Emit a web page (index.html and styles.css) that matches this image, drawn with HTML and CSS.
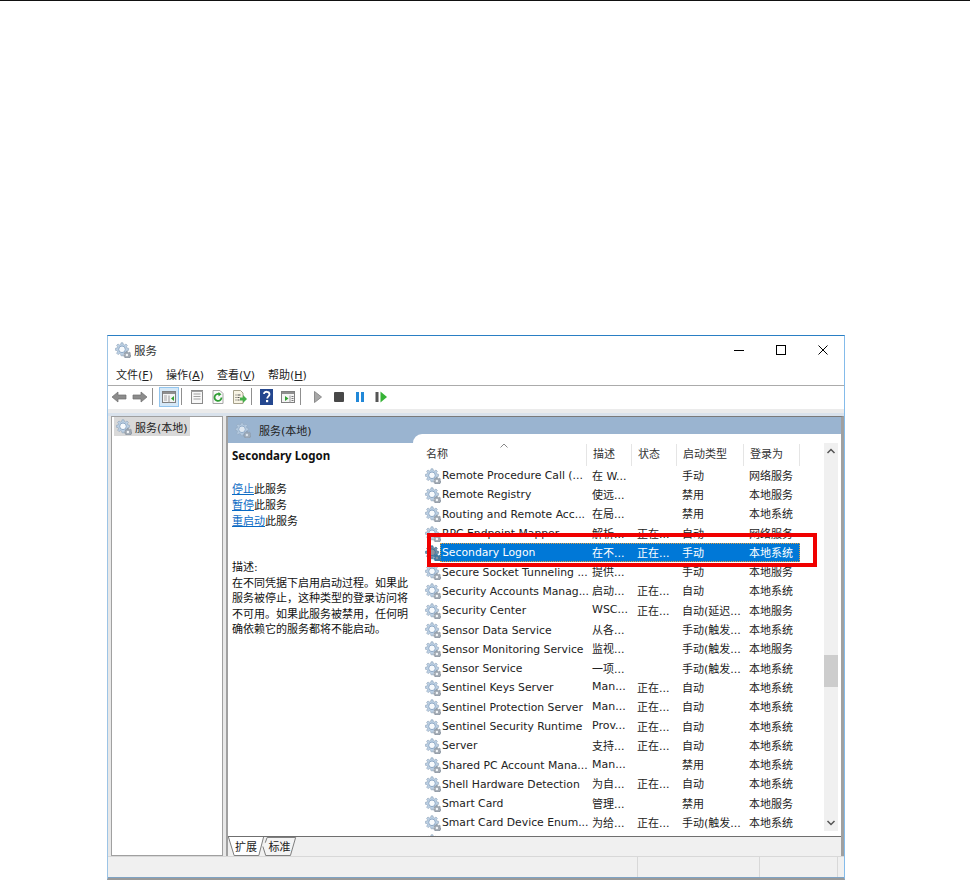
FILE: index.html
```html
<!DOCTYPE html>
<html lang="zh">
<head>
<meta charset="utf-8">
<title>服务</title>
<link rel="stylesheet" href="styles.css">
</head>
<body>
<svg class="defs" width="0" height="0" aria-hidden="true">
  <defs>
    <symbol id="gear" viewBox="0 0 16 16">
      <path d="M6 .8h2l.3 1.7 1.2.5L11 2l1.400 1.400-1 1.400.5 1.200 1.700.3v2l-1.700.3-.5 1.200 1 1.400L11 12.600l-1.500-1-1.200.5-.3 1.700H6l-.3-1.700-1.200-.5-1.500 1L1.600 11.200l1-1.400-.5-1.200L.4 8.300v-2l1.700-.3.5-1.200-1-1.400L3 2l1.500 1 1.200-.5z" fill="#bcd0e4" stroke="#8fa3b9" stroke-width=".6"/>
      <circle cx="7" cy="7.300" r="3.300" fill="#f7fafd" stroke="#86a2c0" stroke-width=".9"/>
      <path d="M11.200 9.400h1.400l.2 1 .8.3.9-.6 1 1-.6.9.3.8.8.2v1.400l-.8.2-.3.8.2.6H9.700l.2-.6-.3-.8-.8-.2v-1.400l.8-.2.3-.8-.6-.9 1-1 .9.6.8-.3z" fill="#a3abb4" stroke="#7b8794" stroke-width=".5"/>
      <circle cx="11.900" cy="13" r="1.200" fill="#f2f5f8"/>
    </symbol>
  </defs>
</svg>
<div class="topline"></div>
<main class="window">
  <header class="titlebar">
    <svg class="ic-gear"><use href="#gear"/></svg>
    <span class="title-text">服务</span>
    <div class="controls">
      <svg class="ctl" viewBox="0 0 12 12"><path d="M1 6.500h10" stroke="#000" fill="none"/></svg>
      <svg class="ctl" viewBox="0 0 12 12"><rect x="1.500" y="1.500" width="9" height="9" stroke="#000" fill="none"/></svg>
      <svg class="ctl" viewBox="0 0 12 12"><path d="M1.500 1.500l9 9M10.500 1.500l-9 9" stroke="#000" fill="none"/></svg>
    </div>
  </header>
  <nav class="menubar">
    <span class="menu">文件(<u>F</u>)</span>
    <span class="menu">操作(<u>A</u>)</span>
    <span class="menu">查看(<u>V</u>)</span>
    <span class="menu">帮助(<u>H</u>)</span>
  </nav>
  <div class="toolbar">
    <span class="tb"><svg viewBox="0 0 16 16"><path d="M1 8l6-5v3h8v4H7v3z" fill="#8c8c8c" stroke="#6e6e6e" stroke-width=".7"/></svg></span>
    <span class="tb"><svg viewBox="0 0 16 16"><path d="M15 8L9 3v3H1v4h8v3z" fill="#8c8c8c" stroke="#6e6e6e" stroke-width=".7"/></svg></span>
    <span class="sep"></span>
    <span class="tb tb-active"><svg viewBox="0 0 16 16"><rect x="1.500" y="2.500" width="13" height="11" fill="#f4f4f4" stroke="#7f7f7f"/><path d="M2 3h12v2H2z" fill="#8f8f8f"/><path d="M8 6.500v7" stroke="#9a9a9a"/><path d="M3 7h3M3 9h3M3 11h3" stroke="#a8a8a8"/><path d="M13 7v5l-3-2.500z" fill="#30a030"/></svg></span>
    <span class="sep"></span>
    <span class="tb"><svg viewBox="0 0 16 16"><rect x="2.500" y="1.500" width="11" height="13" fill="#f7f7f7" stroke="#8a8a8a"/><path d="M2 2.500h12M4.500 5h7M4.500 7.500h7M4.500 10h7" stroke="#a0a0a0"/></svg></span>
    <span class="tb"><svg viewBox="0 0 16 16"><path d="M3 1.500h7l3 3v10H3z" fill="#fafafa" stroke="#a5a5a5"/><path d="M11.500 8.500A3.500 3.500 0 1 1 9.500 5.300" fill="none" stroke="#2f9e35" stroke-width="1.800"/><path d="M8.500 3v4.500l3-2.200z" fill="#2f9e35"/></svg></span>
    <span class="tb"><svg viewBox="0 0 16 16"><path d="M2.500 1.500h7l2.500 2.500v10.500h-9.500z" fill="#f8f4e4" stroke="#a5a08a"/><path d="M4.500 6h1M4.500 8.500h1M4.500 11h1M6.500 6h3M6.500 8.500h2M6.500 11h2" stroke="#555"/><path d="M9 8.500h3V6l4 4-4 4v-2.500H9z" fill="#46b04a"/></svg></span>
    <span class="sep"></span>
    <span class="tb"><svg viewBox="0 0 16 16"><rect x="1" y="0" width="13" height="16" fill="#24478f"/><path d="M5 5c0-3 5.500-3 5.500.2 0 2-2.300 2.300-2.300 4.300" fill="none" stroke="#fff" stroke-width="1.800"/><rect x="7" y="11" width="2.200" height="2.200" fill="#fff"/></svg></span>
    <span class="tb"><svg viewBox="0 0 16 16"><rect x="1.500" y="2.500" width="13" height="11" fill="#f4f4f4" stroke="#7f7f7f"/><path d="M2 3h12v2H2z" fill="#8f8f8f"/><path d="M10 6.500v7" stroke="#9a9a9a"/><path d="M11.500 7.500h2M11.500 9.500h2M11.500 11.500h2" stroke="#777"/><path d="M5 7v5l3.500-2.500z" fill="#30a030"/></svg></span>
    <span class="sep"></span>
    <span class="tb tb-after"><svg viewBox="0 0 16 16"><path d="M4.500 2.500v11l7-5.500z" fill="#a8a8a8" stroke="#8c8c8c"/></svg></span>
    <span class="tb"><svg viewBox="0 0 16 16"><rect x="3" y="3" width="10" height="10" rx="1" fill="#484848"/></svg></span>
    <span class="tb"><svg viewBox="0 0 16 16"><rect x="4" y="3" width="3" height="10" fill="#2188d8"/><rect x="9" y="3" width="3" height="10" fill="#2188d8"/></svg></span>
    <span class="tb"><svg viewBox="0 0 16 16"><rect x="2.500" y="3" width="3" height="10" fill="#555"/><path d="M7.500 2.500v11l6.500-5.500z" fill="#36b336"/></svg></span>
  </div>
  <div class="strip"></div>
  <div class="panes">
    <aside class="tree">
      <div class="tree-item"><svg class="ic-gear"><use href="#gear"/></svg><span>服务(本地)</span></div>
    </aside>
    <section class="main">
      <div class="band">
        <svg class="ic-gear band-gear"><use href="#gear"/></svg><span>服务(本地)</span>
      </div>
      <div class="content">
        <div class="detail">
          <h2 class="svc-name">Secondary Logon</h2>
          <p class="actions"><a class="act">停止</a>此服务<br><a class="act">暂停</a>此服务<br><a class="act">重启动</a>此服务</p>
          <p class="desc">描述:<br>在不同凭据下启用启动过程。如果此服务被停止，这种类型的登录访问将不可用。如果此服务被禁用，任何明确依赖它的服务都将不能启动。</p>
        </div>
        <div class="listwrap">
          <div class="listarea">
            <div class="row head">
              <span class="c c1 h">名称<svg class="sort" viewBox="0 0 8 5"><path d="M.5 4.500L4 1l3.500 3.500" fill="none" stroke="#888"/></svg></span>
              <span class="c c2 h">描述</span>
              <span class="c c3 h">状态</span>
              <span class="c c4 h">启动类型</span>
              <span class="c c5 h">登录为</span>
            </div>
            <div class="rows">
              <div class="row"><svg class="ic-gear"><use href="#gear"/></svg><span class="c c1">Remote Procedure Call (...</span><span class="c c2">在 W...</span><span class="c c3"></span><span class="c c4">手动</span><span class="c c5">网络服务</span></div>
              <div class="row"><svg class="ic-gear"><use href="#gear"/></svg><span class="c c1">Remote Registry</span><span class="c c2">使远...</span><span class="c c3"></span><span class="c c4">禁用</span><span class="c c5">本地服务</span></div>
              <div class="row"><svg class="ic-gear"><use href="#gear"/></svg><span class="c c1">Routing and Remote Acc...</span><span class="c c2">在局...</span><span class="c c3"></span><span class="c c4">禁用</span><span class="c c5">本地系统</span></div>
              <div class="row"><svg class="ic-gear"><use href="#gear"/></svg><span class="c c1">RPC Endpoint Mapper</span><span class="c c2">解析...</span><span class="c c3">正在...</span><span class="c c4">自动</span><span class="c c5">网络服务</span></div>
              <div class="row selected"><svg class="ic-gear"><use href="#gear"/></svg><div class="sel-bar"><span class="c c1">Secondary Logon</span><span class="c c2">在不...</span><span class="c c3">正在...</span><span class="c c4">手动</span><span class="c c5">本地系统</span></div></div>
              <div class="row"><svg class="ic-gear"><use href="#gear"/></svg><span class="c c1">Secure Socket Tunneling ...</span><span class="c c2">提供...</span><span class="c c3"></span><span class="c c4">手动</span><span class="c c5">本地服务</span></div>
              <div class="row"><svg class="ic-gear"><use href="#gear"/></svg><span class="c c1">Security Accounts Manag...</span><span class="c c2">启动...</span><span class="c c3">正在...</span><span class="c c4">自动</span><span class="c c5">本地系统</span></div>
              <div class="row"><svg class="ic-gear"><use href="#gear"/></svg><span class="c c1">Security Center</span><span class="c c2">WSC...</span><span class="c c3">正在...</span><span class="c c4">自动(延迟...</span><span class="c c5">本地服务</span></div>
              <div class="row"><svg class="ic-gear"><use href="#gear"/></svg><span class="c c1">Sensor Data Service</span><span class="c c2">从各...</span><span class="c c3"></span><span class="c c4">手动(触发...</span><span class="c c5">本地系统</span></div>
              <div class="row"><svg class="ic-gear"><use href="#gear"/></svg><span class="c c1">Sensor Monitoring Service</span><span class="c c2">监视...</span><span class="c c3"></span><span class="c c4">手动(触发...</span><span class="c c5">本地服务</span></div>
              <div class="row"><svg class="ic-gear"><use href="#gear"/></svg><span class="c c1">Sensor Service</span><span class="c c2">一项...</span><span class="c c3"></span><span class="c c4">手动(触发...</span><span class="c c5">本地系统</span></div>
              <div class="row"><svg class="ic-gear"><use href="#gear"/></svg><span class="c c1">Sentinel Keys Server</span><span class="c c2">Man...</span><span class="c c3">正在...</span><span class="c c4">自动</span><span class="c c5">本地系统</span></div>
              <div class="row"><svg class="ic-gear"><use href="#gear"/></svg><span class="c c1">Sentinel Protection Server</span><span class="c c2">Man...</span><span class="c c3">正在...</span><span class="c c4">自动</span><span class="c c5">本地系统</span></div>
              <div class="row"><svg class="ic-gear"><use href="#gear"/></svg><span class="c c1">Sentinel Security Runtime</span><span class="c c2">Prov...</span><span class="c c3">正在...</span><span class="c c4">自动</span><span class="c c5">本地系统</span></div>
              <div class="row"><svg class="ic-gear"><use href="#gear"/></svg><span class="c c1">Server</span><span class="c c2">支持...</span><span class="c c3">正在...</span><span class="c c4">自动</span><span class="c c5">本地系统</span></div>
              <div class="row"><svg class="ic-gear"><use href="#gear"/></svg><span class="c c1">Shared PC Account Mana...</span><span class="c c2">Man...</span><span class="c c3"></span><span class="c c4">禁用</span><span class="c c5">本地系统</span></div>
              <div class="row"><svg class="ic-gear"><use href="#gear"/></svg><span class="c c1">Shell Hardware Detection</span><span class="c c2">为自...</span><span class="c c3">正在...</span><span class="c c4">自动</span><span class="c c5">本地系统</span></div>
              <div class="row"><svg class="ic-gear"><use href="#gear"/></svg><span class="c c1">Smart Card</span><span class="c c2">管理...</span><span class="c c3"></span><span class="c c4">禁用</span><span class="c c5">本地服务</span></div>
              <div class="row"><svg class="ic-gear"><use href="#gear"/></svg><span class="c c1">Smart Card Device Enum...</span><span class="c c2">为给...</span><span class="c c3">正在...</span><span class="c c4">手动(触发...</span><span class="c c5">本地系统</span></div>
              <div class="row"><svg class="ic-gear"><use href="#gear"/></svg></div>
            </div>
            <div class="redbox"></div>
          </div>
          <div class="scrollbar">
            <svg class="sb-arrow" viewBox="0 0 14 16"><path d="M3.500 10L7 6.500 10.500 10" fill="none" stroke="#555" stroke-width="1.500"/></svg>
            <div class="sb-track"><div class="sb-thumb"></div></div>
            <svg class="sb-arrow" viewBox="0 0 14 16"><path d="M3.500 6L7 9.500 10.500 6" fill="none" stroke="#555" stroke-width="1.500"/></svg>
          </div>
        </div>
      </div>
      <div class="tabs">
        <span class="tab tab-on"><svg class="tab-shape" viewBox="0 0 37 20"><path d="M0 0l6 19.500h26L37 0" fill="#fff" stroke="#777"/></svg><span class="tab-label">扩展</span></span>
        <span class="tab tab-off"><svg class="tab-shape" viewBox="0 0 35 20"><path d="M0 10L3 19.500h26L34.500 .5H4.500L2.500 6" fill="#f4f4f4" stroke="#777"/></svg><span class="tab-label">标准</span></span>
      </div>
    </section>
  </div>
  <footer class="status">
    <span class="st st1"></span><span class="st st2"></span><span class="st st3"></span>
  </footer>
</main>
</body>
</html>
```

FILE: styles.css
```css
html, body { margin: 0; padding: 0; background: #fff; }
body {
  font-family: "DejaVu Sans", "Noto Sans CJK SC", sans-serif;
  font-size: 11px;
  color: #111;
  height: 880px;
  overflow: hidden;
}
.defs { position: absolute; }
.topline { height: 1px; background: #111; }
.window {
  box-sizing: border-box;
  width: 738px;
  height: 545px;
  margin: 334px 0 0 107px;
  border-top: 1px solid #2a7fc4;
  border-left: 1px solid #9cc4e6;
  border-right: 1px solid #84bbea;
  border-bottom: 2px solid #9a9a9a;
  display: flex;
  flex-direction: column;
  background: #fff;
}
.titlebar { height: 27px; display: flex; align-items: center; padding-left: 7px; flex: none; }
.ic-gear { width: 16px; height: 16px; flex: none; }
.title-text { margin-left: 3px; font-size: 11.500px; color: #333; }
.controls { margin-left: auto; display: flex; }
.ctl { width: 12px; height: 12px; margin-right: 30px; }
.ctl:last-child { margin-right: 15px; }
.menubar {
  height: 23px;
  flex: none;
  display: flex;
  align-items: center;
  padding: 0 0 0 8px;
  box-sizing: border-box;
  border-bottom: 1px solid #ababab;
}
.menu { width: 51px; color: #222; }
.menu:first-child { width: 50px; }
.toolbar { height: 23px; display: flex; align-items: center; padding: 0 0 2px; box-sizing: border-box; flex: none; }
.tb { width: 21px; height: 21px; display: flex; align-items: center; justify-content: center; flex: none; }
.tb svg { width: 16px; height: 16px; }
.tb-active {
  width: 18px;
  height: 18px;
  margin-left: 2px;
  background: #d5e8f7;
  border: 1px solid #92c5ee;
}
.tb-after { margin-left: 2px; }
.sep { width: 1px; height: 17px; background: #8f8f8f; margin: 0 4px 0 2px; flex: none; }
.strip { height: 7px; flex: none; background: linear-gradient(#ebebeb 0 4px, #d9e2ec 4px); }
.panes {
  flex: 1;
  min-height: 0;
  display: flex;
  padding: 0 0 0 3px;
  gap: 3px;
  background: #e8e8e8;
}
.tree {
  box-sizing: border-box;
  width: 112px;
  background: #fff;
  border: 1px solid #a0a0a0;
  padding: 0 0 0 2px;
}
.tree-item {
  width: 76px;
  height: 19px;
  background: #d9d9d9;
  display: flex;
  align-items: center;
  gap: 3px;
  padding-left: 2px;
  box-sizing: border-box;
  white-space: nowrap;
  color: #222;
}
.main {
  flex: 1;
  min-width: 0;
  border-top: 1px solid #7a7a7a;
  border-left: 2px solid #a0a0a0;
  border-right: 3px solid #a0a0a0;
  display: flex;
  flex-direction: column;
}
.band {
  height: 26px;
  flex: none;
  background: #9ab4d0;
  display: flex;
  align-items: center;
  padding: 0 0 1px 7px;
  box-sizing: border-box;
  color: #222;
}
.band-gear { margin-right: 8px; opacity: .75; }
.content { flex: 1; min-height: 0; display: flex; background: #fff; }
.detail { width: 185px; flex: none; padding: 6px 0 0 4px; box-sizing: border-box; }
.svc-name { margin: 0; font-family: "Noto Sans", sans-serif; font-size: 11.500px; font-weight: bold; line-height: 14px; color: #111; }
.actions { margin: 19px 0 0; line-height: 16px; }
.act { color: #0a6ac4; text-decoration: underline; }
.desc { margin: 30px 0 0; line-height: 15.600px; width: 178px; }
.listwrap {
  flex: 1;
  min-width: 0;
  margin-top: -9px;
  background: #fff;
  border-top-left-radius: 9px;
  display: flex;
  padding-top: 9px;
  box-sizing: border-box;
  position: relative;
}
.listarea { width: 411px; flex: none; overflow: hidden; }
.row {
  display: flex;
  align-items: center;
  height: 19.300px;
  padding-left: 12px;
  white-space: nowrap;
}
.head { height: 23px; padding-left: 9px; color: #333; }
.c { display: block; overflow: hidden; flex: none; color: #222; box-sizing: border-box; }
.h { height: 22px; line-height: 22px; border-right: 1px solid #e5e5e5; position: relative; overflow: visible; color: #333; }
.c1 { width: 135px; padding-left: 1px; font-size: 10.800px; }
.c2, .c3, .c4, .c5 { padding-left: 6px; margin-bottom: 2px; }
.row .c1 { overflow: visible; }
.c2 { width: 45px; }
.c3 { width: 45px; }
.c4 { width: 67px; }
.c5 { width: 56px; }
.row:not(.head) .c2 { margin-left: 10px; }
.h.c1 { width: 165px; padding-left: 4px; font-size: 11px; }
.h.c2, .h.c3, .h.c4, .h.c5 { margin-bottom: 0; }
.sort { position: absolute; left: 78px; top: -1px; width: 8px; height: 5px; }
.rows { height: 398px; overflow: hidden; }
.selected .ic-gear { filter: sepia(1) saturate(7) hue-rotate(175deg) brightness(.62); }
.sel-bar {
  display: flex;
  align-items: center;
  height: 19px;
  box-sizing: border-box;
  background: #0078d7;
  outline: 1px dotted #e8a040;
  outline-offset: -1px;
  width: 360px;
  margin-left: -1px;
  padding-left: 1px;
}
.sel-bar .c { color: #fff; }
.redbox {
  position: absolute;
  left: 14px;
  top: 99px;
  width: 382px;
  height: 26px;
  border: 4px solid #f00000;
}
.scrollbar {
  width: 14px;
  height: 388px;
  background: #f0f0f0;
  display: flex;
  flex-direction: column;
  flex: none;
}
.sb-arrow { width: 14px; height: 16px; flex: none; }
.sb-track { flex: 1; min-height: 0; padding-top: 196px; box-sizing: border-box; }
.sb-thumb { height: 32px; background: #cdcdcd; }
.tabs {
  height: 20px;
  flex: none;
  display: flex;
  background: #f0f0f0;
  border-top: 1px solid #6f6f6f;
  box-sizing: border-box;
}
.tab { position: relative; display: flex; align-items: center; justify-content: center; height: 19px; padding-bottom: 1px; box-sizing: border-box; }
.tab-on { width: 36px; }
.tab-off { width: 35px; margin-left: -2px; }
.tab-shape { position: absolute; left: 0; top: 0; width: 100%; height: 100%; }
.tab-label { position: relative; color: #222; }
.status {
  height: 22px;
  flex: none;
  display: flex;
  background: #f0f0f0;
  border-top: 1px solid #d8d8d8;
  border-bottom: 1px solid #7fa3c4;
  box-sizing: border-box;
}
.st { border-right: 1px solid #d8d8d8; box-sizing: border-box; }
.st1 { width: 530px; }
.st2 { width: 122px; }
.st3 { width: 78px; }
```
